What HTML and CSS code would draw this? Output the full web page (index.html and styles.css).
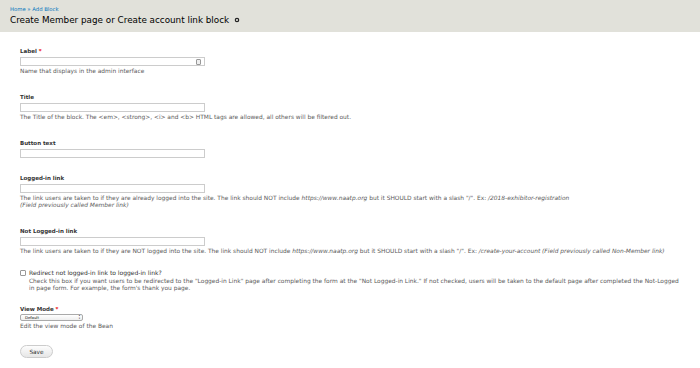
FILE: index.html
```html
<!DOCTYPE html>
<html>
<head>
<meta charset="utf-8">
<link rel="stylesheet" href="styles.css">
</head>
<body>
<header class="page-header">
  <nav class="breadcrumb"><a href="#">Home</a> » <a href="#">Add Block</a></nav>
  <h1 class="page-title">Create Member page or Create account link block
    <svg class="gear" width="6" height="6" viewBox="0 0 6 6"><circle cx="3" cy="3" r="1.7" fill="none" stroke="#222" stroke-width="1.2"/></svg>
  </h1>
</header>
<main class="content">
  <form class="block-form">
    <div class="form-item">
      <label class="form-label">Label <span class="req">*</span></label>
      <div class="input-wrap">
        <input class="text-input" type="text">
        <span class="contact-icon"></span>
      </div>
      <div class="description">Name that displays in the admin interface</div>
    </div>
    <div class="form-item">
      <label class="form-label">Title</label>
      <input class="text-input" type="text">
      <div class="description">The Title of the block. The &lt;em&gt;, &lt;strong&gt;, &lt;i&gt; and &lt;b&gt; HTML tags are allowed, all others will be filtered out.</div>
    </div>
    <div class="form-item no-desc">
      <label class="form-label">Button text</label>
      <input class="text-input" type="text">
    </div>
    <div class="form-item">
      <label class="form-label">Logged-in link</label>
      <input class="text-input" type="text">
      <div class="description">The link users are taken to if they are already logged into the site. The link should NOT include <em>https://www.naatp.org</em> but it SHOULD start with a slash "/". Ex: <em>/2018-exhibitor-registration</em><br><em>(Field previously called Member link)</em></div>
    </div>
    <div class="form-item before-check">
      <label class="form-label">Not Logged-in link</label>
      <input class="text-input" type="text">
      <div class="description">The link users are taken to if they are NOT logged into the site. The link should NOT include <em>https://www.naatp.org</em> but it SHOULD start with a slash "/". Ex: <em>/create-your-account (Field previously called Non-Member link)</em></div>
    </div>
    <div class="form-item checkbox-item">
      <div class="checkbox-row">
        <span class="checkbox"></span>
        <span class="checkbox-label">Redirect not logged-in link to logged-in link?</span>
      </div>
      <div class="description indented">Check this box if you want users to be redirected to the "Logged-in Link" page after completing the form at the "Not Logged-in Link." If not checked, users will be taken to the default page after completed the Not-Logged in page form. For example, the form's thank you page.</div>
    </div>
    <div class="form-item last-item">
      <label class="form-label">View Mode <span class="req">*</span></label>
      <div class="select">
        <span class="select-text">Default</span>
        <span class="select-arrows">▴<br>▾</span>
      </div>
      <div class="description">Edit the view mode of the Bean</div>
    </div>
    <div class="actions">
      <button class="button" type="button">Save</button>
    </div>
  </form>
</main>
</body>
</html>
```

FILE: styles.css
```css
html, body {
  margin: 0;
  padding: 0;
  background: #fff;
}
body {
  font-family: "DejaVu Sans", Verdana, sans-serif;
  color: #333;
  width: 700px;
  height: 368px;
  overflow: hidden;
}
.page-header {
  background: #e1e1da;
  height: 32px;
  box-sizing: border-box;
  padding: 6px 10px 0 10px;
}
.breadcrumb {
  font-size: 5.3px;
  line-height: 6px;
  color: #0074bd;
}
.breadcrumb a {
  color: #0074bd;
  text-decoration: none;
}
.page-title {
  margin: 2px 0 0 0;
  font-size: 8.8px;
  line-height: 12px;
  font-weight: normal;
  color: #000;
  display: flex;
  align-items: center;
  gap: 5px;
}
.gear {
  display: block;
}
.content {
  padding: 16px 9px 0 20px;
}
.block-form {
  margin: 0;
}
.form-item {
  margin-bottom: 19px;
}
.form-item.no-desc {
  margin-bottom: 17px;
}
.form-item.before-check {
  margin-bottom: 14px;
}
.form-item.last-item {
  margin-bottom: 15px;
}
.form-label {
  display: block;
  font-size: 5.5px;
  line-height: 7px;
  font-weight: bold;
  color: #333;
  margin-bottom: 2px;
}
.req {
  color: #e00;
}
.input-wrap {
  position: relative;
  width: 185px;
}
.text-input {
  display: block;
  box-sizing: border-box;
  width: 185px;
  height: 9px;
  margin: 0;
  padding: 0;
  border: 1px solid #ccc;
  border-radius: 0;
  background: #fff;
  outline: none;
}
.contact-icon {
  position: absolute;
  right: 4px;
  top: 2px;
  width: 3px;
  height: 4px;
  border: 1px solid #999;
  border-radius: 1px;
  background: #eee;
}
.description {
  font-size: 5.9px;
  line-height: 7px;
  color: #5a5a5a;
  margin-top: 2px;
}
.description em {
  font-style: italic;
}
.checkbox-item {
  margin-bottom: 14px;
}
.checkbox-row {
  display: flex;
  align-items: center;
  gap: 3px;
}
.checkbox {
  display: block;
  width: 4px;
  height: 4px;
  border: 1px solid #999;
  border-radius: 1px;
  background: #fff;
}
.checkbox-label {
  font-size: 6px;
  line-height: 7px;
  color: #333;
}
.description.indented {
  padding-left: 9px;
  padding-right: 6px;
  margin-top: 2px;
}
.select {
  box-sizing: border-box;
  width: 63px;
  height: 7px;
  margin-top: -1px;
  border: 1px solid #aaa;
  border-radius: 2px;
  background: linear-gradient(#fff, #eee);
  display: flex;
  align-items: center;
  justify-content: space-between;
  padding: 0 2px 0 4px;
}
.select-text {
  font-size: 3.8px;
  line-height: 5px;
  color: #111;
}
.select-arrows {
  font-size: 2.6px;
  line-height: 2.2px;
  color: #333;
}
.actions {
  margin-top: 0;
}
.button {
  display: block;
  box-sizing: border-box;
  width: 33px;
  height: 13px;
  border: 1px solid #ccc;
  border-radius: 7px;
  background: linear-gradient(#fdfdfd, #e6e6e6);
  font-family: "DejaVu Sans", Verdana, sans-serif;
  font-size: 5.8px;
  color: #333;
  padding: 0;
  margin: 0;
}
```
